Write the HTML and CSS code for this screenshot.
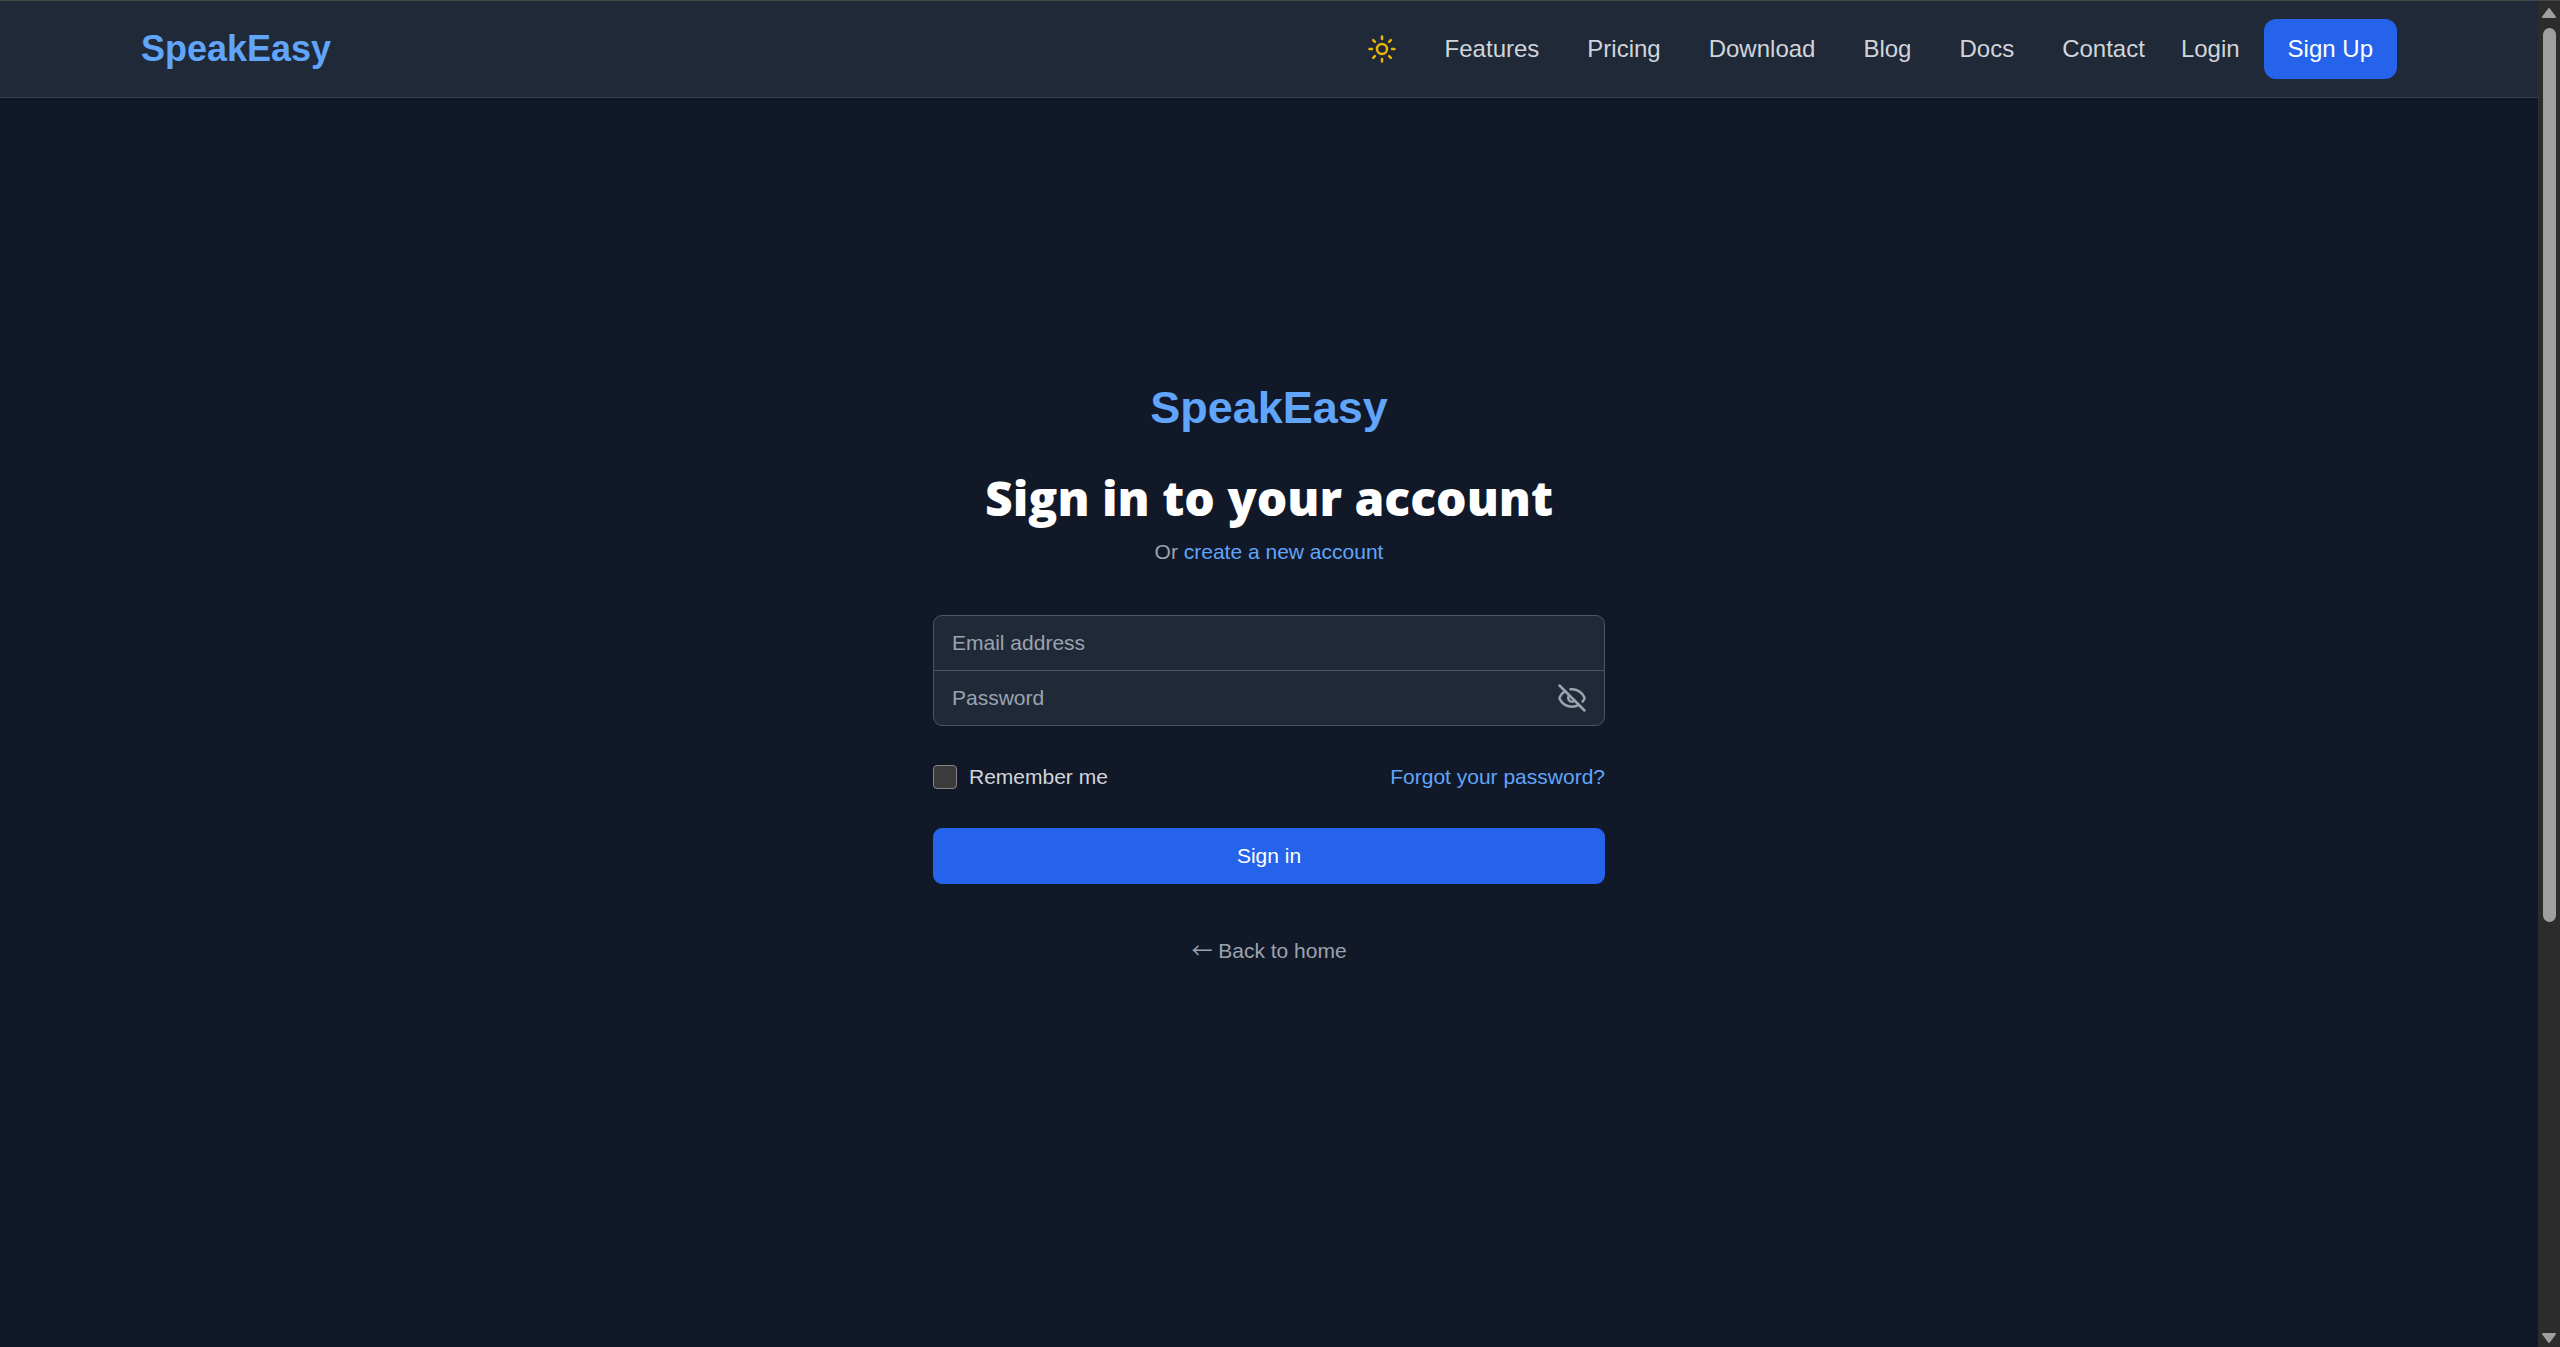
FILE: index.html
```html
<!DOCTYPE html>
<html lang="en">
<head>
<meta charset="utf-8">
<title>Sign in - SpeakEasy</title>
<meta name="viewport" content="width=device-width, initial-scale=1">
<link rel="stylesheet" href="styles.css">
</head>
<body>
<div class="window">
  <div class="page">
    <header class="site-header">
      <div class="container">
        <a class="brand" href="#">SpeakEasy</a>
        <nav class="nav" aria-label="Main">
          <button class="theme-toggle" type="button" aria-label="Toggle theme">
            <svg class="icon" viewBox="0 0 24 24" aria-hidden="true"><circle cx="12" cy="12" r="4"/><path d="M12 2v2M12 20v2M4.93 4.93l1.41 1.41M17.66 17.66l1.41 1.41M2 12h2M20 12h2M6.34 17.66l-1.41 1.41M19.07 4.93l-1.41 1.41"/></svg>
          </button>
          <div class="nav-links">
            <a href="#">Features</a>
            <a href="#">Pricing</a>
            <a href="#">Download</a>
            <a href="#">Blog</a>
            <a href="#">Docs</a>
            <a href="#">Contact</a>
          </div>
          <div class="nav-account">
            <a href="#">Login</a>
            <a class="signup" href="#">Sign Up</a>
          </div>
        </nav>
      </div>
    </header>
    <main class="main">
      <div class="card">
        <a class="card-brand" href="#">SpeakEasy</a>
        <h1 class="title">Sign in to your account</h1>
        <p class="subtitle">Or <a class="link" href="#">create a new account</a></p>
        <form class="form">
          <div class="fields">
            <input class="field field-first" type="email" placeholder="Email address" aria-label="Email address">
            <div class="password">
              <input class="field field-last" type="password" placeholder="Password" aria-label="Password">
              <button class="reveal" type="button" aria-label="Show password">
                <svg class="icon" viewBox="0 0 24 24" aria-hidden="true"><path d="M10.733 5.076a10.744 10.744 0 0 1 11.205 6.575 1 1 0 0 1 0 .696 10.747 10.747 0 0 1-1.444 2.49"/><path d="M14.084 14.158a3 3 0 0 1-4.242-4.242"/><path d="M17.479 17.499a10.75 10.75 0 0 1-15.417-5.151 1 1 0 0 1 0-.696 10.75 10.75 0 0 1 4.446-5.143"/><path d="m2 2 20 20"/></svg>
              </button>
            </div>
          </div>
          <div class="options">
            <label class="remember" for="remember"><input class="checkbox" id="remember" type="checkbox">Remember me</label>
            <a class="link" href="#">Forgot your password?</a>
          </div>
          <button class="submit" type="submit">Sign in</button>
        </form>
        <a class="back" href="#"><span class="back-arrow">←</span> Back to home</a>
      </div>
    </main>
  </div>
  <div class="scrollbar" aria-hidden="true">
    <svg class="arrow" viewBox="0 0 16 12"><path d="M8 2 14 10H2z"/></svg>
    <div class="track"><div class="thumb"></div></div>
    <svg class="arrow" viewBox="0 0 16 12"><path d="M8 10 14 2H2z"/></svg>
  </div>
</div>
</body>
</html>
```
FILE: styles.css
```css
* { box-sizing: border-box; }

body {
  margin: 0;
  background: #111827;
  color: #d1d5db;
  font-family: "Liberation Sans", Arial, sans-serif;
  font-size: 21px;
  line-height: 30px;
}

a { color: inherit; text-decoration: none; }

button, input { font: inherit; margin: 0; }

button {
  border: 0;
  cursor: pointer;
}

.window {
  display: flex;
  min-height: 100vh;
  border-top: 1px solid #454746;
}

.page { flex: 1; }

.icon {
  display: block;
  width: 30px;
  height: 30px;
  fill: none;
  stroke: currentColor;
  stroke-width: 2;
  stroke-linecap: round;
  stroke-linejoin: round;
}

/* Header */
.site-header {
  background: #1f2937;
  border-bottom: 1px solid #374151;
  font-size: 24px;
  line-height: 36px;
}

.container {
  display: flex;
  align-items: center;
  justify-content: space-between;
  max-width: 2304px;
  margin: 0 auto;
  padding: 18px 24px;
}

.brand {
  color: #60a5fa;
  font-size: 36px;
  font-weight: 700;
}

.nav, .nav-links, .nav-account {
  display: flex;
  align-items: center;
}

.nav { gap: 36px; }
.nav-links { gap: 48px; }
.nav-account { gap: 24px; }

.theme-toggle {
  padding: 12px;
  background: none;
  color: #eab308;
}

.signup {
  padding: 12px 24px;
  border-radius: 12px;
  background: #2563eb;
  color: #fff;
}

/* Sign-in form */
.main {
  display: flex;
  justify-content: center;
  padding: 283px 24px 0;
}

.card {
  display: flex;
  flex-direction: column;
  align-items: center;
  width: 100%;
  max-width: 672px;
}

.card-brand {
  color: #60a5fa;
  font-size: 45px;
  font-weight: 700;
  line-height: 54px;
}

.title {
  margin: 36px 0 12px;
  color: #fff;
  font-family: "Arial Black", "Open Sans", sans-serif;
  font-size: 48px;
  font-weight: 900;
  line-height: 54px;
  white-space: nowrap;
}

.subtitle {
  margin: 0;
  color: #9ca3af;
}

.link { color: #60a5fa; }

.form {
  display: flex;
  flex-direction: column;
  gap: 36px;
  width: 100%;
  margin: 48px 0 52px;
}

.field {
  display: block;
  width: 100%;
  height: 56px;
  padding: 12px 18px;
  border: 1px solid #4b5563;
  background: #1f2937;
  color: #fff;
}

.field::placeholder { color: #9ca3af; opacity: 1; }
.field-first { border-radius: 9px 9px 0 0; }
.field-last { border-radius: 0 0 9px 9px; padding-right: 60px; }

.password {
  position: relative;
  margin-top: -1px;
}

.reveal {
  position: absolute;
  top: 0;
  right: 0;
  bottom: 0;
  padding: 0 18px;
  background: none;
  color: #9ca3af;
}

.options {
  display: flex;
  align-items: center;
  justify-content: space-between;
}

.remember {
  display: flex;
  align-items: center;
  gap: 12px;
}

.checkbox {
  appearance: none;
  width: 24px;
  height: 24px;
  border: 1px solid #858585;
  border-radius: 4px;
  background: #3b3b3b;
}

.submit {
  padding: 13px 24px;
  border-radius: 9px;
  background: #2563eb;
  color: #fff;
}

.back { color: #9ca3af; }

.back-arrow {
  font-family: "Noto Sans CJK JP", sans-serif;
  line-height: 1;
}

/* Scrollbar */
.scrollbar {
  display: flex;
  flex-direction: column;
  align-items: center;
  justify-content: space-between;
  width: 22px;
  padding: 6px 0 3px;
  background: #2c2c2c;
}

.arrow {
  width: 16px;
  height: 12px;
  fill: #9f9f9f;
  stroke: #9f9f9f;
  stroke-width: 2;
  stroke-linejoin: round;
}

.track {
  flex: 1;
  padding: 9px 0;
}

.thumb {
  width: 13px;
  height: 69%;
  border-radius: 7px;
  background: #9f9f9f;
}
```
